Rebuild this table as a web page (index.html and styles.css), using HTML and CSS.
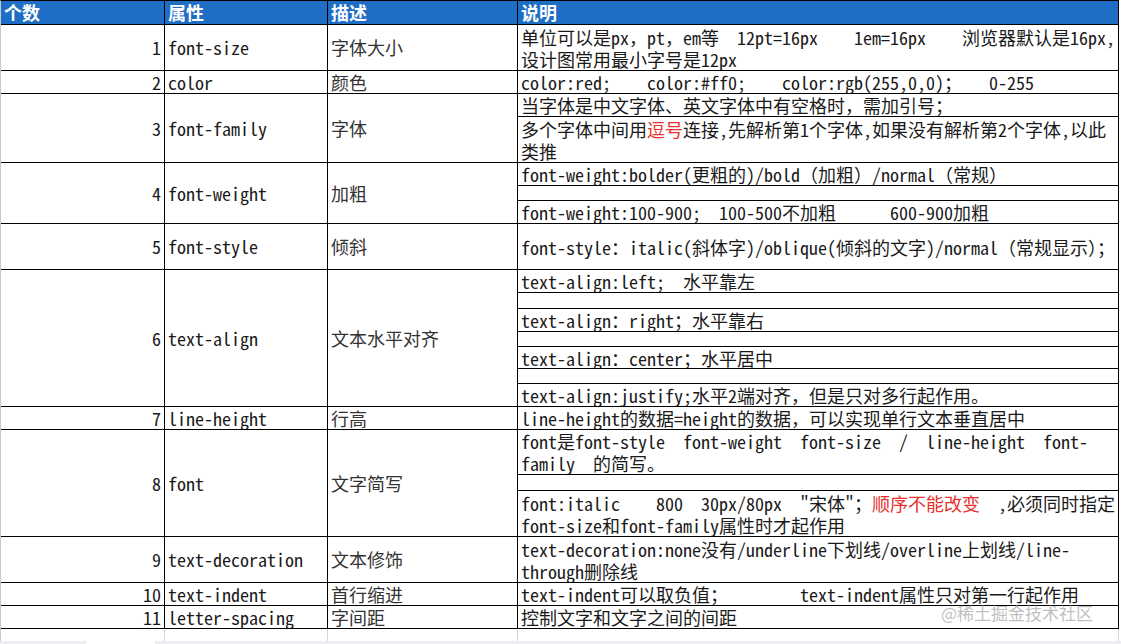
FILE: index.html
```html
<!DOCTYPE html>
<html lang="zh-CN">
<head>
<meta charset="utf-8">
<title>CSS 字体属性</title>
<link rel="stylesheet" href="styles.css">
</head>
<body>
<div class="sheet">
  <div class="grid">
    <div class="c h">个数</div>
    <div class="c h">属性</div>
    <div class="c h">描述</div>
    <div class="c h">说明</div>

    <div class="c n">1</div>
    <div class="c p">font-size</div>
    <div class="c t">字体大小</div>
    <div class="c d"><div class="v">单位可以是px，pt，em等  12pt=16px    1em=16px    浏览器默认是16px,<br>设计图常用最小字号是12px</div></div>

    <div class="c n">2</div>
    <div class="c p">color</div>
    <div class="c t">颜色</div>
    <div class="c d"><div class="v">color:red;    color:#ff0;    color:rgb(255,0,0)；   0-255</div></div>

    <div class="c n s2">3</div>
    <div class="c p s2">font-family</div>
    <div class="c t s2">字体</div>
    <div class="c d"><div class="v">当字体是中文字体、英文字体中有空格时，需加引号；</div></div>
    <div class="c d"><div class="v">多个字体中间用<span class="red">逗号</span>连接,先解析第1个字体,如果没有解析第2个字体,以此<br>类推</div></div>

    <div class="c n s3">4</div>
    <div class="c p s3">font-weight</div>
    <div class="c t s3">加粗</div>
    <div class="c d"><div class="v">font-weight:bolder(更粗的)/bold（加粗）/normal（常规）</div></div>
    <div class="c d"></div>
    <div class="c d"><div class="v">font-weight:100-900;  100-500不加粗      600-900加粗</div></div>

    <div class="c n">5</div>
    <div class="c p">font-style</div>
    <div class="c t">倾斜</div>
    <div class="c d"><div class="v">font-style：italic(斜体字)/oblique(倾斜的文字)/normal（常规显示）；</div></div>

    <div class="c n s7">6</div>
    <div class="c p s7">text-align</div>
    <div class="c t s7">文本水平对齐</div>
    <div class="c d"><div class="v">text-align:left;  水平靠左</div></div>
    <div class="c d"></div>
    <div class="c d"><div class="v">text-align：right；水平靠右</div></div>
    <div class="c d"></div>
    <div class="c d"><div class="v">text-align：center；水平居中</div></div>
    <div class="c d"></div>
    <div class="c d"><div class="v">text-align:justify;水平2端对齐，但是只对多行起作用。</div></div>

    <div class="c n">7</div>
    <div class="c p">line-height</div>
    <div class="c t">行高</div>
    <div class="c d"><div class="v">line-height的数据=height的数据，可以实现单行文本垂直居中</div></div>

    <div class="c n s3">8</div>
    <div class="c p s3">font</div>
    <div class="c t s3">文字简写</div>
    <div class="c d"><div class="v">font是font-style  font-weight  font-size  /  line-height  font-<br>family  的简写。</div></div>
    <div class="c d"></div>
    <div class="c d"><div class="v">font:italic    800  30px/80px  "宋体"；<span class="red">顺序不能改变</span>  ,必须同时指定<br>font-size和font-family属性时才起作用</div></div>

    <div class="c n">9</div>
    <div class="c p">text-decoration</div>
    <div class="c t">文本修饰</div>
    <div class="c d"><div class="v">text-decoration:none没有/underline下划线/overline上划线/line-<br>through删除线</div></div>

    <div class="c n">10</div>
    <div class="c p">text-indent</div>
    <div class="c t">首行缩进</div>
    <div class="c d"><div class="v">text-indent可以取负值；        text-indent属性只对第一行起作用</div></div>

    <div class="c n">11</div>
    <div class="c p">letter-spacing</div>
    <div class="c t">字间距</div>
    <div class="c d"><div class="v">控制文字和文字之间的间距</div></div>

    <div class="c e"></div>
    <div class="c e"></div>
    <div class="c e"></div>
    <div class="c e"></div>
  </div>
  <div class="strip"><span class="tab"></span></div>
  <div class="mark">@稀土掘金技术社区</div>
</div>
</body>
</html>
```

FILE: styles.css
```css
html, body {
  margin: 0;
  padding: 0;
  background: #ffffff;
}

body {
  font-family: "Noto Sans Mono CJK SC", "Noto Sans CJK SC", "Liberation Mono", monospace;
  font-size: 18px;
  color: #1a1a1a;
}

.sheet {
  position: relative;
  width: 1121px;
  height: 644px;
  overflow: hidden;
}

.grid {
  display: grid;
  grid-template-columns: 164px 163px 190px 601px;
  grid-template-rows: 24px 46px 23px 23px 46px 23px 15px 23px 46px 23px 16px 23px 15px 22px 15px 23px 23px 45px 16px 46px 46px 23px 23px 12px;
  width: max-content;
  border-top: 1px solid #000000;
  border-left: 1px solid #c3c8d3;
}

.c {
  box-sizing: border-box;
  display: flex;
  align-items: center;
  border-right: 1px solid #000000;
  border-bottom: 1px solid #000000;
  white-space: pre;
  line-height: 21px;
  overflow: hidden;
  min-width: 0;
}

.v {
  white-space: pre;
  line-height: 22px;
}

.h {
  background: #1f6ec6;
  color: #ffffff;
  font-weight: 700;
  padding-left: 3px;
}

.n {
  justify-content: flex-end;
  padding-right: 3px;
}

.p {
  padding-left: 3px;
}

.t {
  padding-left: 3px;
  color: #333333;
}

.d {
  grid-column: 4;
  padding-left: 3px;
}

.s2 { grid-row: span 2; }
.s3 { grid-row: span 3; }
.s7 { grid-row: span 7; }

.e {
  border-right: 1px solid #d6d6d6;
  border-bottom: none;
}

.red {
  color: #e8302c;
}

.strip {
  display: flex;
  height: 4px;
  background: #eceef2;
}

.tab {
  width: 69px;
  margin-left: 86px;
  background: #ffffff;
}

.mark {
  position: absolute;
  left: 941px;
  top: 604px;
  font-family: "Noto Sans CJK SC", sans-serif;
  font-size: 17px;
  line-height: 17px;
  color: rgba(170, 170, 170, 0.75);
  white-space: nowrap;
}
```
